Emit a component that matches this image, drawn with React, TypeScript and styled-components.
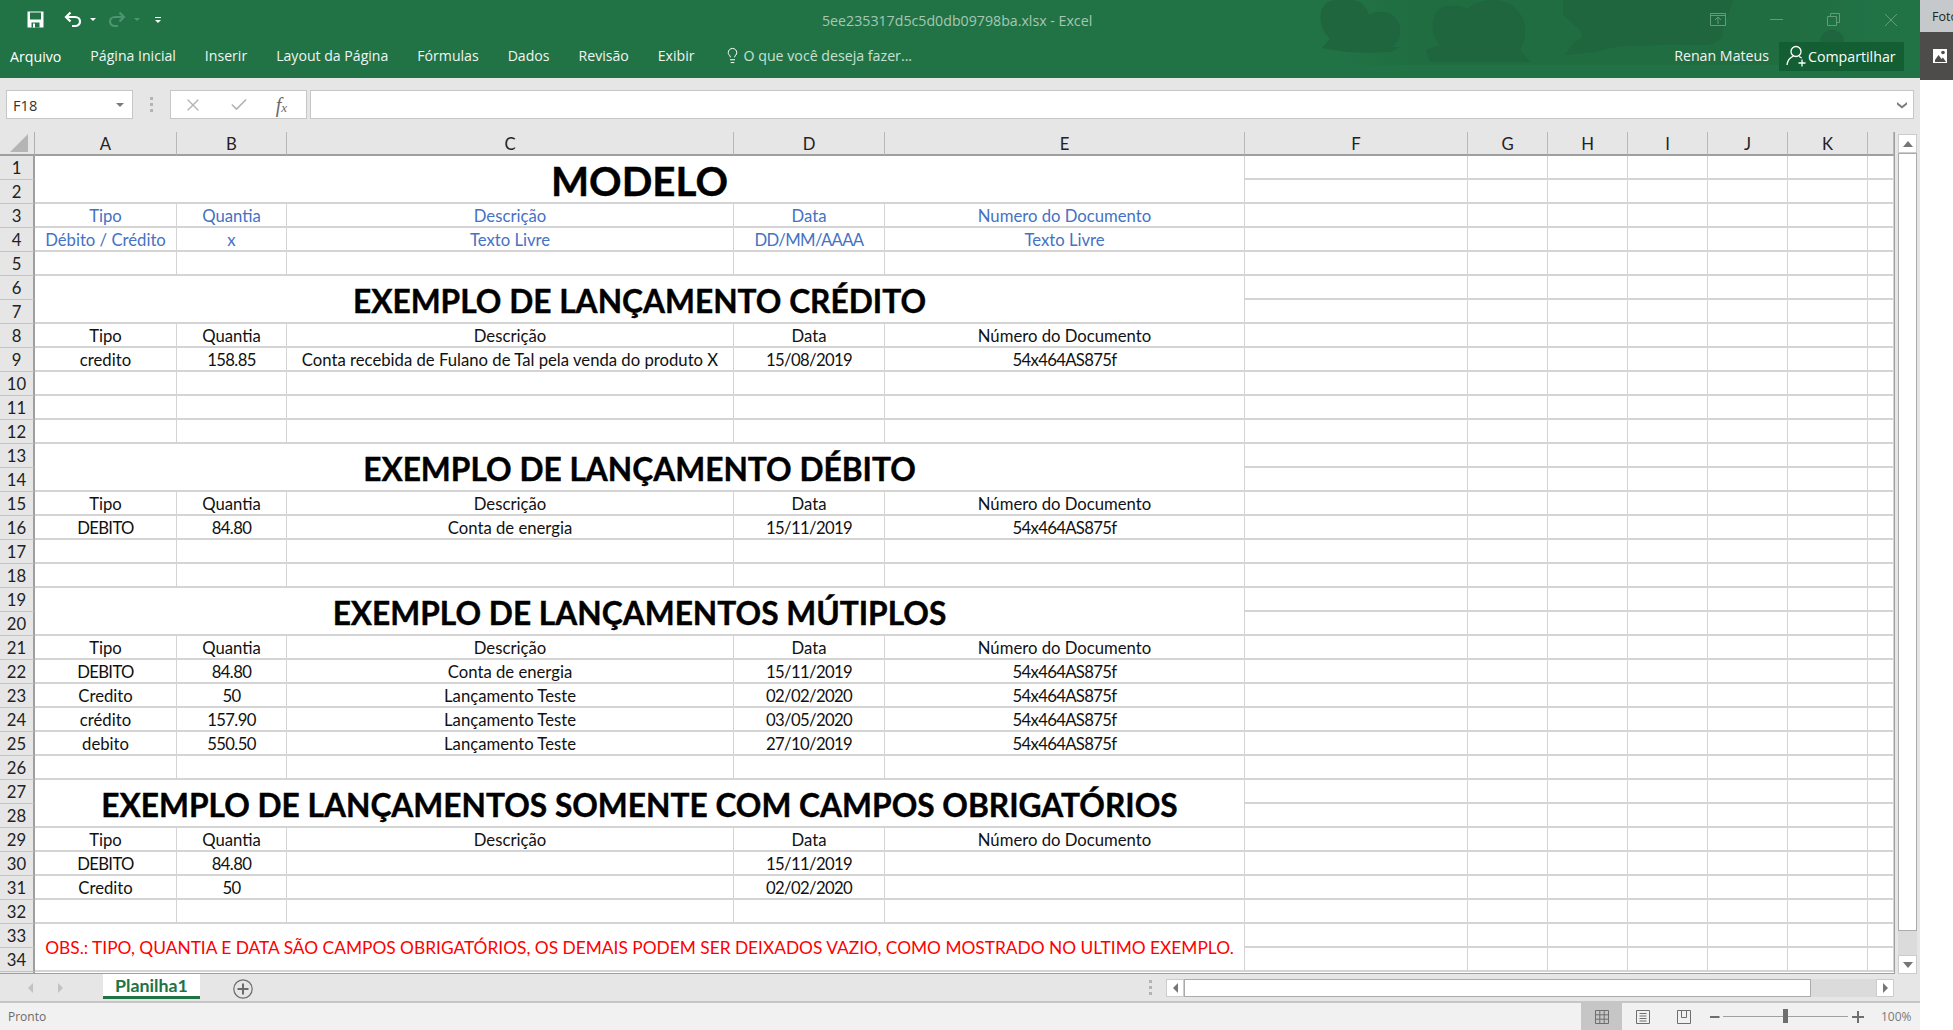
import React from "react";
import styled, { createGlobalStyle } from "styled-components";
import { Lightbulb, X, Check } from "lucide-react";

const GREEN = "#217346";
const BAR = "#e6e6e6";
const GRID_LINE = "#d4d4d4";

type Tone = "plain" | "blue";

interface SheetRow {
  n: number;
  kind: "cells" | "title" | "note" | "covered";
  tone?: Tone;
  cells?: string[];
  text?: string;
  big?: boolean;
}

const HEAD = ["Tipo", "Quantia", "Descrição", "Data", "Número do Documento"];
const DOC = "54x464AS875f";
const EMPTY = ["", "", "", "", ""];

const ROWS: SheetRow[] = [
  { n: 1, kind: "title", text: "MODELO", big: true },
  { n: 2, kind: "covered" },
  { n: 3, kind: "cells", tone: "blue", cells: ["Tipo", "Quantia", "Descrição", "Data", "Numero do Documento"] },
  { n: 4, kind: "cells", tone: "blue", cells: ["Débito / Crédito", "x", "Texto Livre", "DD/MM/AAAA", "Texto Livre"] },
  { n: 5, kind: "cells", cells: EMPTY },
  { n: 6, kind: "title", text: "EXEMPLO DE LANÇAMENTO CRÉDITO" },
  { n: 7, kind: "covered" },
  { n: 8, kind: "cells", cells: HEAD },
  { n: 9, kind: "cells", cells: ["credito", "158.85", "Conta recebida de Fulano de Tal pela venda do produto X", "15/08/2019", DOC] },
  { n: 10, kind: "cells", cells: EMPTY },
  { n: 11, kind: "cells", cells: EMPTY },
  { n: 12, kind: "cells", cells: EMPTY },
  { n: 13, kind: "title", text: "EXEMPLO DE LANÇAMENTO DÉBITO" },
  { n: 14, kind: "covered" },
  { n: 15, kind: "cells", cells: HEAD },
  { n: 16, kind: "cells", cells: ["DEBITO", "84.80", "Conta de energia", "15/11/2019", DOC] },
  { n: 17, kind: "cells", cells: EMPTY },
  { n: 18, kind: "cells", cells: EMPTY },
  { n: 19, kind: "title", text: "EXEMPLO DE LANÇAMENTOS MÚTIPLOS" },
  { n: 20, kind: "covered" },
  { n: 21, kind: "cells", cells: HEAD },
  { n: 22, kind: "cells", cells: ["DEBITO", "84.80", "Conta de energia", "15/11/2019", DOC] },
  { n: 23, kind: "cells", cells: ["Credito", "50", "Lançamento Teste", "02/02/2020", DOC] },
  { n: 24, kind: "cells", cells: ["crédito", "157.90", "Lançamento Teste", "03/05/2020", DOC] },
  { n: 25, kind: "cells", cells: ["debito", "550.50", "Lançamento Teste", "27/10/2019", DOC] },
  { n: 26, kind: "cells", cells: EMPTY },
  { n: 27, kind: "title", text: "EXEMPLO DE LANÇAMENTOS SOMENTE COM CAMPOS OBRIGATÓRIOS" },
  { n: 28, kind: "covered" },
  { n: 29, kind: "cells", cells: HEAD },
  { n: 30, kind: "cells", cells: ["DEBITO", "84.80", "", "15/11/2019", ""] },
  { n: 31, kind: "cells", cells: ["Credito", "50", "", "02/02/2020", ""] },
  { n: 32, kind: "cells", cells: EMPTY },
  {
    n: 33,
    kind: "note",
    text: "OBS.: TIPO, QUANTIA E DATA SÃO CAMPOS OBRIGATÓRIOS, OS DEMAIS PODEM SER DEIXADOS VAZIO, COMO MOSTRADO NO ULTIMO EXEMPLO.",
  },
  { n: 34, kind: "covered" },
];

const TABS = ["Página Inicial", "Inserir", "Layout da Página", "Fórmulas", "Dados", "Revisão", "Exibir"];
const COLUMNS = ["A", "B", "C", "D", "E", "F", "G", "H", "I", "J", "K", ""];

// digits and capitals come out wider in Lato than in the sheet's font
const isTight = (text: string): boolean => /\d/.test(text) || /^[A-Z/]{2,}$/.test(text);

const App = (): JSX.Element => {
  const renderFiller = (n: number): JSX.Element[] =>
    [0, 1, 2, 3, 4, 5, 6].map(i => <Cell key={`${n}-f${i}`} />);

  const renderRow = (row: SheetRow): React.ReactNode[] => {
    const out: React.ReactNode[] = [<RowHead key={`h${row.n}`}>{row.n}</RowHead>];
    if (row.kind === "title") {
      out.push(
        <TitleCell key={`t${row.n}`} $big={row.big}>
          {row.text}
        </TitleCell>
      );
    }
    if (row.kind === "note") {
      out.push(<NoteCell key={`t${row.n}`}>{row.text}</NoteCell>);
    }
    if (row.kind === "cells" && row.cells) {
      row.cells.forEach((c, i) => {
        out.push(
          <Cell key={`${row.n}-${i}`} $tone={row.tone} $tight={isTight(c)}>
            {c}
          </Cell>
        );
      });
    }
    return out.concat(renderFiller(row.n));
  };

  return (
    <Page>
      <GlobalStyle />
      <Main>
        <Ribbon>
          <Decor viewBox="0 0 1920 66" preserveAspectRatio="none" aria-hidden="true">
            <defs>
              <linearGradient id="fade" x1="0" x2="1" y1="0" y2="0">
                <stop offset="0" stopColor="#217346" stopOpacity="0" />
                <stop offset="0.2" stopColor="#206d42" stopOpacity="1" />
                <stop offset="0.8" stopColor="#206d42" stopOpacity="1" />
                <stop offset="1" stopColor="#217346" stopOpacity="0.2" />
              </linearGradient>
            </defs>
            <rect x="1290" y="0" width="630" height="65" fill="url(#fade)" />
            <path
              d="M1322 48l8-9c-8-8-11-18-9-27 2-8 8-12 16-12h14c9 0 15 6 18 15 4-3 10-4 15-3 8 1 15 7 16 16 1 9-2 15-8 19l8 0-6 4c-20 3-50 2-72-3z"
              fill="#1f653e"
            />
            <path
              d="M1426 50l14-5c-8-9-9-20-6-29 3-8 10-11 20-10 6 0 10 1 14 3 5-5 14-9 24-9 15 0 25 7 30 17 5 11 4 23-2 33l10 12h-100z"
              fill="#1f653e"
            />
            <path
              d="M1563 0h170c-3 14-10 22-10 32 0 8-8 12-18 13-40 0-42-1-60 1-20-1-32 1-50 6l-30 3 10-14c9-2 9-8 2-14l-14-12z"
              fill="#1f653e"
            />
            <circle cx="1832" cy="42" r="12" fill="#1f653e" />
          </Decor>
          <TitleBar>
            <QuickAccess>
              <svg width="17" height="17" viewBox="0 0 17 17">
                <path d="M0.5 0.5h16v16h-16z" fill="#fff" />
                <path d="M3 1.5h11v7H3z" fill={GREEN} />
                <path d="M4.5 11.5h8v5h-8z" fill={GREEN} />
                <path d="M6 12.5h2v4H6z" fill="#fff" />
              </svg>
              <UndoIcon viewBox="0 0 18 17" $dim={false}>
                <path d="M6.5 1.5L2 6l4.5 4.5M2.5 6H11c3 0 5 2 5 4.5S14 15 11 15H8" />
              </UndoIcon>
              <SmallCaret $dim={false} />
              <UndoIcon viewBox="0 0 18 17" $dim $flip>
                <path d="M6.5 1.5L2 6l4.5 4.5M2.5 6H11c3 0 5 2 5 4.5S14 15 11 15H8" />
              </UndoIcon>
              <SmallCaret $dim />
              <Customize>
                <span />
                <SmallCaret $dim={false} />
              </Customize>
            </QuickAccess>
            <DocTitle>5ee235317d5c5d0db09798ba.xlsx - Excel</DocTitle>
            <WindowControls>
              <svg width="16" height="13" viewBox="0 0 16 13">
                <path d="M0.5 0.5h15v12h-15zM0.5 2.5h15M8 11V4.5M5 7l3-3 3 3" />
              </svg>
              <svg width="13" height="13" viewBox="0 0 13 13">
                <path d="M0 6.5h13" />
              </svg>
              <svg width="13" height="13" viewBox="0 0 13 13">
                <path d="M0.5 3.5h9v9h-9zM3.5 3.5v-3h9v9h-3" />
              </svg>
              <svg width="14" height="14" viewBox="0 0 14 14">
                <path d="M1 1l12 12M13 1L1 13" />
              </svg>
            </WindowControls>
          </TitleBar>
          <TabBar>
            <FileTab>Arquivo</FileTab>
            {TABS.map(t => (
              <Tab key={t}>{t}</Tab>
            ))}
            <TellMe>
              <Lightbulb size={17} strokeWidth={1.4} color="#fff" />
              <span>O que você deseja fazer...</span>
            </TellMe>
            <UserName>Renan Mateus</UserName>
            <ShareButton>
              <svg width="21" height="22" viewBox="0 0 21 22" fill="none" stroke="#fff" strokeWidth="1.3">
                <circle cx="10" cy="6.5" r="5" />
                <path d="M1 20c.5-4 3-7.5 6.5-8.8M13 11.5c1 .4 2 1 2.6 1.7M16 14.5v7M12.5 18h7" />
              </svg>
              Compartilhar
            </ShareButton>
          </TabBar>
        </Ribbon>

        <FormulaBar>
          <NameBox>
            F18
            <NameCaret />
          </NameBox>
          <Grip>
            <i />
            <i />
            <i />
          </Grip>
          <FxBox>
            <X size={20} strokeWidth={1.6} color="#b4b4b4" />
            <Check size={20} strokeWidth={2} color="#b4b4b4" />
            <FxLabel>
              f<small>x</small>
            </FxLabel>
          </FxBox>
          <FormulaInput>
            <svg width="12" height="8" viewBox="0 0 12 8">
              <path d="M1 1l5 4 5-4v2.5L6 7.5 1 3.5z" fill="#7a7a7a" />
            </svg>
          </FormulaInput>
        </FormulaBar>

        <SheetArea>
          <Grid>
            <Corner>
              <svg width="20" height="20" viewBox="0 0 20 20">
                <path d="M19 1v18H1z" fill="#b5b5b5" />
              </svg>
            </Corner>
            {COLUMNS.map((c, i) => (
              <ColHead key={i}>{c}</ColHead>
            ))}
            {ROWS.map(renderRow)}
            <RowHead />
          </Grid>
          <VerticalScroll>
            <ScrollButton>
              <Tri $dir="up" />
            </ScrollButton>
            <VerticalThumb />
            <VerticalTrack />
            <ScrollButton>
              <Tri $dir="down" />
            </ScrollButton>
          </VerticalScroll>
        </SheetArea>

        <SheetBar>
          <SheetNav>
            <Tri $dir="left" $light />
            <Tri $dir="right" $light />
          </SheetNav>
          <SheetTab>Planilha1</SheetTab>
          <AddSheet>
            <svg width="20" height="20" viewBox="0 0 20 20" fill="none" stroke="#6b6b6b">
              <circle cx="10" cy="10" r="9.2" strokeWidth="1.2" />
              <path d="M10 4.5v11M4.5 10h11" strokeWidth="2" />
            </svg>
          </AddSheet>
          <Grip $tab>
            <i />
            <i />
            <i />
          </Grip>
          <HorizontalScroll>
            <HorizontalButton>
              <Tri $dir="left" />
            </HorizontalButton>
            <HorizontalThumb />
            <HorizontalTrack />
            <HorizontalButton>
              <Tri $dir="right" />
            </HorizontalButton>
          </HorizontalScroll>
        </SheetBar>

        <StatusBar>
          <StatusText>Pronto</StatusText>
          <ViewButton $active>
            <svg width="14" height="14" viewBox="0 0 14 14" fill="none" stroke="#6e6e6e">
              <path d="M.5.5h13v13H.5zM.5 4.8h13M.5 9.2h13M4.8.5v13M9.2.5v13" />
            </svg>
          </ViewButton>
          <ViewButton>
            <svg width="14" height="14" viewBox="0 0 14 14" fill="none" stroke="#6e6e6e">
              <path d="M.5.5h13v13H.5zM3.5 3.5h7M3.5 6h7M3.5 8.5h7M3.5 11h7" />
            </svg>
          </ViewButton>
          <ViewButton>
            <svg width="14" height="14" viewBox="0 0 14 14" fill="none" stroke="#6e6e6e">
              <path d="M.5.5h13v13H.5zM4.5.5v7h5v-7" />
            </svg>
          </ViewButton>
          <ZoomSign>
            <svg width="10" height="10" viewBox="0 0 10 10">
              <path d="M0 4h9.5v2H0z" fill="#6e6e6e" />
            </svg>
          </ZoomSign>
          <ZoomTrack>
            <ZoomThumb />
          </ZoomTrack>
          <ZoomSign $plus>
            <svg width="12" height="12" viewBox="0 0 12 12">
              <path d="M0 5h12v2H0zM5 0h2v12H5z" fill="#6e6e6e" />
            </svg>
          </ZoomSign>
          <ZoomValue>100%</ZoomValue>
        </StatusBar>
      </Main>
      <SidePanel>
        <SideLabel>Foto</SideLabel>
        <SideIcon>
          <svg width="14" height="14" viewBox="0 0 14 14">
            <path d="M0 0h14v14H0z" fill="#fff" />
            <path d="M2 11l3.5-5 3 4 1.5-1.5L13 13H2z" fill="#4e4c4a" />
            <circle cx="10" cy="3.5" r="1.8" fill="#4e4c4a" />
          </svg>
        </SideIcon>
      </SidePanel>
    </Page>
  );
};

const GlobalStyle = createGlobalStyle`
  html, body {
    margin: 0;
    padding: 0;
    background: #fff;
    overflow: hidden;
  }
`;

const Page = styled.div`
  width: 1953px;
  height: 1030px;
  display: flex;
  font-family: "Open Sans", "Liberation Sans", sans-serif;
`;

const Main = styled.div`
  width: 1920px;
  display: flex;
  flex-direction: column;
  background: ${BAR};
`;

const Ribbon = styled.header`
  position: relative;
  height: 78px;
  background: ${GREEN};
  color: #fff;
`;

const Decor = styled.svg`
  position: absolute;
  left: 0;
  top: 0;
  width: 1920px;
  height: 66px;
`;

const TitleBar = styled.div`
  position: relative;
  height: 39px;
  display: flex;
  align-items: center;
`;

const QuickAccess = styled.div`
  width: 822px;
  padding-left: 27px;
  box-sizing: border-box;
  display: flex;
  align-items: center;
`;

const UndoIcon = styled.svg<{ $dim: boolean; $flip?: boolean }>`
  width: 18px;
  height: 17px;
  margin-left: ${p => (p.$flip ? "12px" : "20px")};
  fill: none;
  stroke: ${p => (p.$dim ? "#4f9470" : "#fff")};
  stroke-width: 2.2;
  transform: ${p => (p.$flip ? "scaleX(-1)" : "none")};
`;

const SmallCaret = styled.span<{ $dim: boolean }>`
  width: 0;
  height: 0;
  margin-left: 8px;
  border-left: 3px solid transparent;
  border-right: 3px solid transparent;
  border-top: 3px solid ${p => (p.$dim ? "#4f9470" : "#fff")};
`;

const Customize = styled.div`
  margin-left: 15px;
  display: flex;
  flex-direction: column;
  align-items: center;
  gap: 2px;

  span:first-child {
    width: 6px;
    height: 1px;
    background: #fff;
  }

  span:last-child {
    margin-left: 0;
  }
`;

const DocTitle = styled.div`
  font-size: 14.2px;
  color: #a6c7b4;
  white-space: nowrap;
  margin-top: 1px;
`;

const WindowControls = styled.div`
  margin-left: auto;
  margin-right: 22px;
  display: flex;
  align-items: center;
  gap: 44px;

  svg {
    fill: none;
    stroke: #5f9d7c;
  }
`;

const TabBar = styled.nav`
  position: relative;
  height: 39px;
  padding-left: 10px;
  padding-right: 16px;
  display: flex;
  align-items: center;
  gap: 29px;
`;

const Tab = styled.span`
  font-size: 14.1px;
  color: #f0f5f2;
  white-space: nowrap;
  margin-top: -7px;
`;

const FileTab = styled(Tab)`
  font-size: 14.2px;
  color: #fff;
  margin-top: -5px;
`;

const TellMe = styled.div`
  display: flex;
  align-items: center;
  gap: 3px;
  font-size: 14.2px;
  color: #c8e0d4;
  white-space: nowrap;
  margin-top: -7px;
`;

const UserName = styled.span`
  margin-left: auto;
  margin-right: -19px;
  font-size: 14.2px;
  color: #f0f5f2;
  margin-top: -7px;
  white-space: nowrap;
`;

const ShareButton = styled.div`
  width: 125px;
  height: 29px;
  box-sizing: border-box;
  padding-left: 7px;
  display: flex;
  align-items: center;
  gap: 1px;
  background: #135e33;
  font-size: 14.2px;
  color: #fff;
  margin-top: -5px;
  white-space: nowrap;
`;

const FormulaBar = styled.div`
  height: 54px;
  box-sizing: border-box;
  padding: 12px 6px 13px 6px;
  display: flex;
  background: ${BAR};
`;

const FieldBox = styled.div`
  box-sizing: border-box;
  height: 29px;
  background: #fff;
  border: 1px solid #c6c6c6;
  display: flex;
  align-items: center;
`;

const NameBox = styled(FieldBox)`
  width: 127px;
  padding: 0 8px 0 6px;
  justify-content: space-between;
  font-size: 14.6px;
  color: #333;
`;

const NameCaret = styled.span`
  width: 0;
  height: 0;
  border-left: 4px solid transparent;
  border-right: 4px solid transparent;
  border-top: 4px solid #7a7a7a;
`;

const Grip = styled.div<{ $tab?: boolean }>`
  width: ${p => (p.$tab ? "auto" : "37px")};
  height: ${p => (p.$tab ? "27px" : "auto")};
  margin-left: ${p => (p.$tab ? "896px" : "0")};
  display: flex;
  flex-direction: column;
  align-items: center;
  justify-content: center;
  gap: 3px;

  i {
    width: 3px;
    height: 3px;
    background: #b4b4b4;
  }
`;

const FxBox = styled(FieldBox)`
  width: 137px;
  padding: 0 19px 0 12px;
  justify-content: space-between;
`;

const FxLabel = styled.span`
  font-family: "Liberation Serif", serif;
  font-style: italic;
  font-size: 20px;
  color: #6a6a6a;
  line-height: 1;

  small {
    font-size: 13px;
  }
`;

const FormulaInput = styled(FieldBox)`
  margin-left: 3px;
  width: 1604px;
  padding-right: 5px;
  justify-content: flex-end;
`;

const SheetArea = styled.div`
  height: 842px;
  display: flex;
`;

const Grid = styled.div`
  width: 1895px;
  height: 842px;
  box-sizing: border-box;
  overflow: hidden;
  display: grid;
  grid-template-columns: 35px 142px 110px 447px 151px 360px 223px 80px 80px 80px 80px 80px 26px;
  grid-template-rows: 24px;
  grid-auto-rows: 24px;
  background: #fff;
  border-right: 1px solid #9f9f9f;
  border-bottom: 1px solid #9f9f9f;
  font-family: "Lato", "Liberation Sans", sans-serif;
  font-size: 16.7px;
  color: #111;
`;

const Corner = styled.div`
  background: ${BAR};
  border-right: 1px solid #b0b0b0;
  border-bottom: 2px solid #9f9f9f;
  box-sizing: border-box;
  display: flex;
  align-items: flex-end;
  justify-content: center;
  padding-bottom: 1px;
  padding-left: 4px;
`;

const ColHead = styled.div`
  background: ${BAR};
  border-right: 1px solid #b8b8b8;
  border-bottom: 2px solid #9f9f9f;
  box-sizing: border-box;
  padding-top: 2px;
  display: flex;
  align-items: center;
  justify-content: center;
  color: #222;
`;

const RowHead = styled.div`
  background: ${BAR};
  border-right: 2px solid #9f9f9f;
  border-bottom: 1px solid #c4c4c4;
  box-sizing: border-box;
  display: flex;
  align-items: center;
  justify-content: center;
  color: #222;
`;

const Cell = styled.div<{ $tone?: Tone; $tight?: boolean }>`
  border-right: 1px solid ${GRID_LINE};
  border-bottom: 2px solid ${GRID_LINE};
  box-sizing: border-box;
  padding-top: 2px;
  display: flex;
  align-items: center;
  justify-content: center;
  white-space: nowrap;
  letter-spacing: ${p => (p.$tight ? "-0.65px" : "0")};
  color: ${p => (p.$tone === "blue" ? "#4472c4" : "#111")};
`;

const TitleCell = styled(Cell)<{ $big?: boolean }>`
  grid-column: span 5;
  grid-row: span 2;
  padding-top: 3px;
  font-weight: 700;
  font-size: ${p => (p.$big ? "40.3px" : "31.7px")};
  color: #000;
  -webkit-text-stroke: 0.4px #000;
`;

const NoteCell = styled(Cell)`
  grid-column: span 5;
  grid-row: span 2;
  padding-top: 0;
  font-size: 17.33px;
  color: #ff0000;
`;

const VerticalScroll = styled.aside`
  width: 25px;
  box-sizing: border-box;
  padding: 2px 3px 0 3px;
  display: flex;
  flex-direction: column;
`;

const ScrollButton = styled.div`
  height: 19px;
  flex: none;
  box-sizing: border-box;
  background: #fff;
  border: 1px solid #ccc;
  display: flex;
  align-items: center;
  justify-content: center;
`;

const VerticalThumb = styled.div`
  height: 778px;
  flex: none;
  box-sizing: border-box;
  background: #fff;
  border: 1px solid #ababab;
`;

const VerticalTrack = styled.div`
  flex: 1;
  background: #dbdbdb;
`;

const Tri = styled.span<{ $dir: "up" | "down" | "left" | "right"; $light?: boolean }>`
  width: 0;
  height: 0;
  ${p => {
    const color = p.$light ? "#c2c2c2" : "#767676";
    if (p.$dir === "up") return `border-left: 5px solid transparent; border-right: 5px solid transparent; border-bottom: 6px solid ${color};`;
    if (p.$dir === "down") return `border-left: 5px solid transparent; border-right: 5px solid transparent; border-top: 6px solid ${color};`;
    if (p.$dir === "left") return `border-top: 5px solid transparent; border-bottom: 5px solid transparent; border-right: 5px solid ${color};`;
    return `border-top: 5px solid transparent; border-bottom: 5px solid transparent; border-left: 5px solid ${color};`;
  }}
`;

const SheetBar = styled.div`
  height: 29px;
  box-sizing: border-box;
  border-bottom: 2px solid #c6c6c6;
  display: flex;
  align-items: flex-start;
  background: ${BAR};
`;

const SheetNav = styled.div`
  width: 103px;
  box-sizing: border-box;
  height: 27px;
  padding: 0 40px 0 28px;
  display: flex;
  align-items: center;
  justify-content: space-between;
`;

const SheetTab = styled.div`
  width: 97px;
  height: 25px;
  box-sizing: border-box;
  background: #fff;
  border-bottom: 3px solid ${GREEN};
  display: flex;
  align-items: center;
  justify-content: center;
  font-family: "Lato", sans-serif;
  font-weight: 700;
  font-size: 17.8px;
  color: ${GREEN};
`;

const AddSheet = styled.div`
  margin-left: 33px;
  margin-top: 5px;
  height: 20px;
`;

const HorizontalScroll = styled.div`
  margin-left: 14px;
  margin-top: 5px;
  width: 728px;
  height: 18px;
  display: flex;
`;

const HorizontalButton = styled.div`
  width: 18px;
  flex: none;
  box-sizing: border-box;
  background: #fff;
  border: 1px solid #ccc;
  display: flex;
  align-items: center;
  justify-content: center;
`;

const HorizontalThumb = styled.div`
  width: 627px;
  flex: none;
  box-sizing: border-box;
  background: #fff;
  border: 1px solid #ababab;
`;

const HorizontalTrack = styled.div`
  flex: 1;
  background: #dbdbdb;
`;

const StatusBar = styled.footer`
  height: 27px;
  display: flex;
  align-items: center;
  background: #f1f1f1;
  font-size: 12px;
  color: #6a6a6a;
`;

const StatusText = styled.span`
  margin-left: 8px;
  width: 1573px;
`;

const ViewButton = styled.div<{ $active?: boolean }>`
  width: 41px;
  height: 27px;
  display: flex;
  align-items: center;
  justify-content: center;
  background: ${p => (p.$active ? "#c6c6c6" : "transparent")};
`;

const ZoomSign = styled.div<{ $plus?: boolean }>`
  width: ${p => (p.$plus ? "12px" : "10px")};
  margin-left: ${p => (p.$plus ? "4px" : "6px")};
  display: flex;
`;

const ZoomTrack = styled.div`
  position: relative;
  margin-left: 3px;
  width: 125px;
  height: 1px;
  background: #a0a0a0;
`;

const ZoomThumb = styled.span`
  position: absolute;
  left: 60px;
  top: -7px;
  width: 5px;
  height: 14px;
  background: #6e6e6e;
`;

const ZoomValue = styled.span`
  margin-left: 17px;
  font-size: 12px;
  color: #7a7a7a;
`;

const SidePanel = styled.aside`
  width: 33px;
  background: #fff;
  overflow: hidden;
`;

const SideLabel = styled.div`
  height: 32px;
  padding: 8px 0 0 12px;
  box-sizing: border-box;
  background: #c6c9cb;
  font-size: 12.5px;
  color: #222;
  white-space: nowrap;
`;

const SideIcon = styled.div`
  height: 48px;
  box-sizing: border-box;
  padding-left: 13px;
  display: flex;
  align-items: center;
  background: #4e4c4a;
`;

export default App;
